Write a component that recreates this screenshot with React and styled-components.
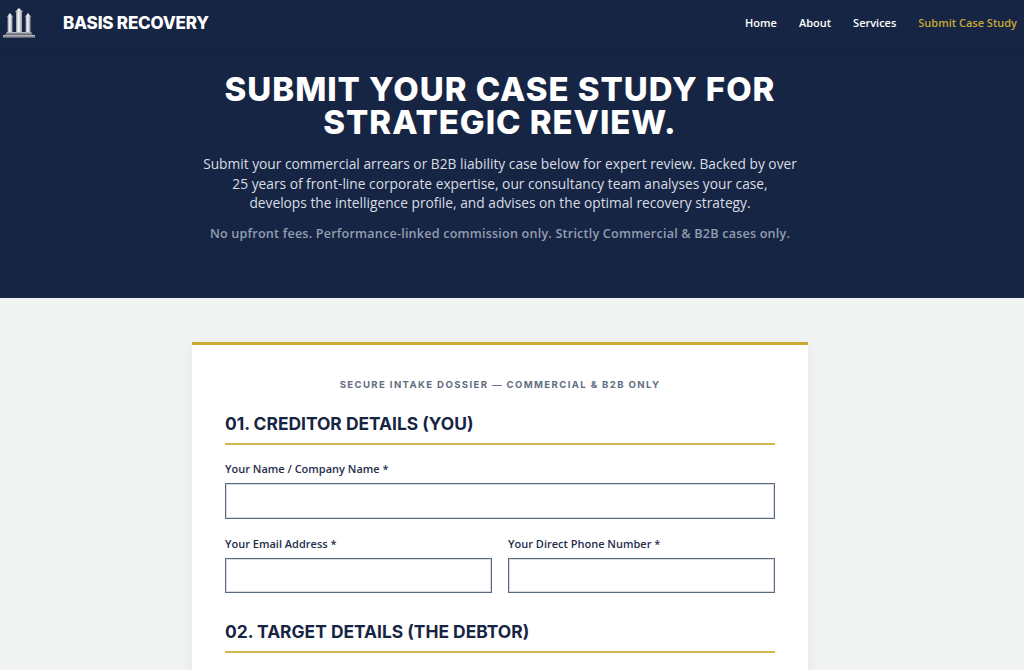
import React from "react";
import styled, { createGlobalStyle } from "styled-components";

const GlobalStyle = createGlobalStyle`
  html, body {
    margin: 0;
    padding: 0;
    height: 670px;
    overflow: hidden;
    background: #f2f4f3;
    font-family: "Open Sans", "Noto Sans", sans-serif;
  }
  * {
    box-sizing: border-box;
  }
`;

const Page = styled.div`
  width: 1024px;
  height: 670px;
  overflow: hidden;
`;

const NavBar = styled.header`
  height: 52px;
  background: #172544;
  display: flex;
  align-items: center;
  justify-content: space-between;
  padding: 0 7px 6px 1px;
  box-shadow: 0 1px 4px rgba(0, 0, 0, 0.15);
  position: relative;
`;

const Brand = styled.div`
  display: flex;
  align-items: center;
  gap: 26px;
`;

const BrandName = styled.span`
  font-family: "Inter", sans-serif;
  font-weight: 800;
  font-size: 17px;
  letter-spacing: -0.2px;
  color: #fff;
`;

const NavLinks = styled.nav`
  display: flex;
  gap: 22px;
  margin-bottom: 2px;
`;

const NavLink = styled.a`
  font-size: 11px;
  font-weight: 600;
  color: ${(p) => (p.$active ? "#c9a935" : "#fff")};
`;

const Hero = styled.section`
  height: 246px;
  background: #172544;
  display: flex;
  flex-direction: column;
  align-items: center;
  padding: 21px 24px 0 0;
`;

const Title = styled.h1`
  margin: 0 0 15px;
  width: 640px;
  font-family: "Inter", sans-serif;
  font-weight: 800;
  font-size: 33px;
  line-height: 33px;
  letter-spacing: 0.95px;
  text-align: center;
  color: #fff;
`;

const Lead = styled.p`
  margin: 0 0 11px;
  width: 596px;
  font-size: 13.75px;
  line-height: 19.5px;
  text-align: center;
  color: #d9dde3;
`;

const Note = styled.p`
  margin: 0;
  font-size: 12.6px;
  line-height: 20px;
  font-weight: 600;
  letter-spacing: 0.2px;
  text-align: center;
  color: #929db0;
`;

const Main = styled.main`
  display: flex;
  justify-content: center;
  padding: 44px 24px 0 0;
`;

const Card = styled.form`
  width: 616px;
  height: 400px;
  background: #fff;
  border-top: 3px solid #c9a935;
  padding: 33px 33px 0;
  box-shadow: 0 4px 16px rgba(0, 0, 0, 0.06);
`;

const Kicker = styled.div`
  font-family: "Inter", sans-serif;
  font-weight: 700;
  font-size: 9.6px;
  line-height: 14px;
  letter-spacing: 1.36px;
  text-align: center;
  color: #626e80;
  margin-bottom: 21px;
`;

const SectionTitle = styled.h2`
  margin: 0 0 16px;
  padding-bottom: 8px;
  border-bottom: 2px solid #d4b84f;
  font-family: "Inter", sans-serif;
  font-weight: 700;
  font-size: 17.4px;
  line-height: 22px;
  color: #172544;
`;

const Row = styled.div`
  display: grid;
  grid-template-columns: ${(p) => (p.$split ? "1fr 1fr" : "1fr")};
  gap: 16px;
  margin-bottom: ${(p) => (p.$split ? "28px" : "17px")};
`;

const Field = styled.label`
  display: block;
`;

const FieldLabel = styled.span`
  display: block;
  font-size: 11px;
  line-height: 16px;
  font-weight: 600;
  color: #1f2d4c;
  margin-bottom: 6px;
`;

const Input = styled.input`
  display: block;
  width: 100%;
  height: 36px;
  background: #fff;
  border: 1px solid #5c6a80;
  border-radius: 0;
  outline: none;
  box-shadow: inset 0 0 0 1px rgba(92, 106, 128, 0.25);
`;

const SplitInput = styled(Input)`
  height: 35px;
`;

function Logo() {
  return (
    <svg width="36" height="38" viewBox="0 2 36 38">
      <defs>
        <linearGradient id="steel" x1="0" y1="0" x2="1" y2="0">
          <stop offset="0" stopColor="#565d6a" />
          <stop offset="0.45" stopColor="#f4f5f6" />
          <stop offset="1" stopColor="#6f7683" />
        </linearGradient>
        <linearGradient id="plinth" x1="0" y1="0" x2="0" y2="1">
          <stop offset="0" stopColor="#c5c9cf" />
          <stop offset="1" stopColor="#4d5360" />
        </linearGradient>
      </defs>
      <path d="M5.5 15 L9 11 L12.5 15 H11.5 V30 H6.5 V15 Z" fill="url(#steel)" />
      <path d="M13.5 10 L18 6 L22.5 10 H21 V30 H15 V10 Z" fill="url(#steel)" />
      <path d="M23.5 15 L27 11 L30.5 15 H29.5 V30 H24.5 V15 Z" fill="url(#steel)" />
      <path d="M6 30 H30 L32 33 H4 Z" fill="url(#plinth)" />
      <rect x="2" y="33" width="32" height="3" fill="url(#plinth)" />
    </svg>
  );
}

export default function App() {
  return (
    <Page>
      <GlobalStyle />
      <NavBar>
        <Brand>
          <Logo />
          <BrandName>BASIS RECOVERY</BrandName>
        </Brand>
        <NavLinks>
          <NavLink>Home</NavLink>
          <NavLink>About</NavLink>
          <NavLink>Services</NavLink>
          <NavLink $active>Submit Case Study</NavLink>
        </NavLinks>
      </NavBar>
      <Hero>
        <Title>SUBMIT YOUR CASE STUDY FOR STRATEGIC REVIEW.</Title>
        <Lead>
          Submit your commercial arrears or B2B liability case below for expert review. Backed by over
          25 years of front-line corporate expertise, our consultancy team analyses your case,
          develops the intelligence profile, and advises on the optimal recovery strategy.
        </Lead>
        <Note>No upfront fees. Performance-linked commission only. Strictly Commercial &amp; B2B cases only.</Note>
      </Hero>
      <Main>
        <Card>
          <Kicker>SECURE INTAKE DOSSIER — COMMERCIAL &amp; B2B ONLY</Kicker>
          <SectionTitle>01. CREDITOR DETAILS (YOU)</SectionTitle>
          <Row>
            <Field>
              <FieldLabel>Your Name / Company Name *</FieldLabel>
              <Input type="text" />
            </Field>
          </Row>
          <Row $split>
            <Field>
              <FieldLabel>Your Email Address *</FieldLabel>
              <SplitInput type="email" />
            </Field>
            <Field>
              <FieldLabel>Your Direct Phone Number *</FieldLabel>
              <SplitInput type="tel" />
            </Field>
          </Row>
          <SectionTitle>02. TARGET DETAILS (THE DEBTOR)</SectionTitle>
        </Card>
      </Main>
    </Page>
  );
}
